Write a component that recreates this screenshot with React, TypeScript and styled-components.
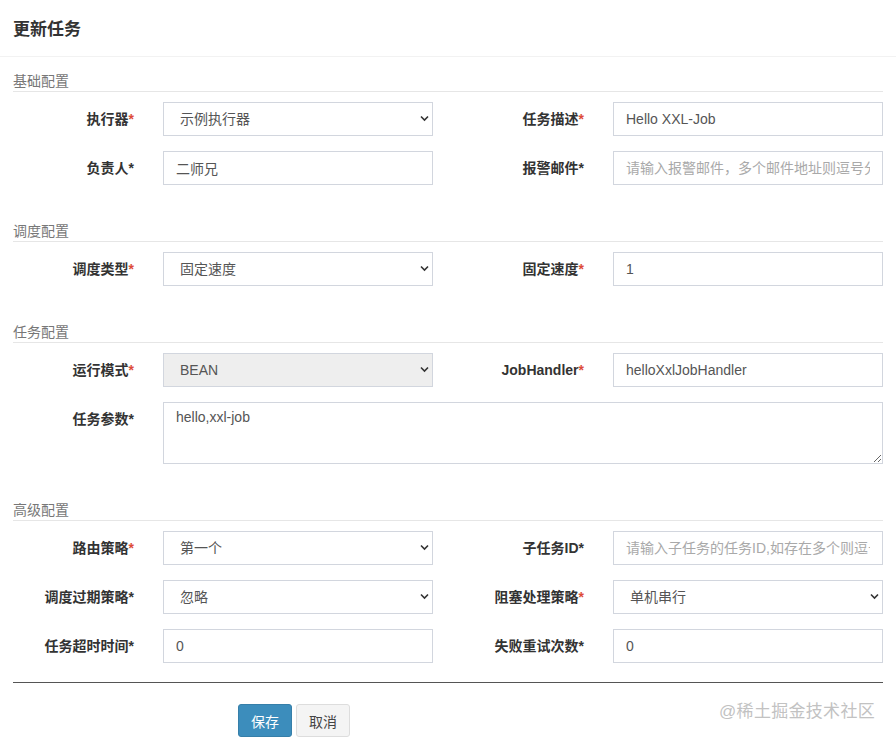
import React from 'react'
import styled, { createGlobalStyle } from 'styled-components'

const GlobalStyle = createGlobalStyle`
  html, body {
    margin: 0;
    padding: 0;
    background: #fff;
  }
  body {
    font-family: "Liberation Sans", "Noto Sans CJK SC", sans-serif;
    font-size: 14px;
    color: #333;
  }
  * { box-sizing: border-box; }
`

const Modal = styled.div`
  width: 896px;
  min-height: 743px;
  background: #fff;
`

const Header = styled.div`
  height: 57px;
  padding: 0 13px;
  display: flex;
  align-items: center;
  border-bottom: 1px solid #f2f2f2;
`

const HeaderTitle = styled.h4`
  margin: 0;
  font-size: 17px;
  font-weight: 600;
  color: #333;
  padding-bottom: 1px;
`

const Body = styled.div`
  padding: 14px 13px 0;
`

const Section = styled.section`
  & + & {
    margin-top: 36px;
  }
`

const SectionTitle = styled.div`
  height: 21px;
  line-height: 20px;
  font-size: 14px;
  color: #777;
  border-bottom: 1px solid #e6e6e6;
  margin-bottom: 10px;
`

const FieldGrid = styled.div`
  display: grid;
  grid-template-columns: 150px 270px 180px 270px;
  row-gap: 15px;
`

const Label = styled.label`
  text-align: right;
  padding: 7px 29px 0 0;
  line-height: 20px;
  font-weight: 700;
  font-size: 14px;
  color: #333;
  white-space: nowrap;
`

const Star = styled.span<{ $red?: boolean }>`
  color: ${(p) => (p.$red ? '#dd4b39' : '#333')};
`

const TextInput = styled.input`
  width: 100%;
  height: 34px;
  padding: 6px 12px;
  border: 1px solid #d2d6de;
  border-radius: 0;
  font-family: inherit;
  font-size: 14px;
  color: #555;
  background: #fff;
  outline: none;
  &::placeholder {
    color: #a9a9a9;
  }
`

const SelectWrap = styled.div`
  position: relative;
  width: 100%;
`

const SelectBox = styled.select`
  width: 100%;
  height: 34px;
  padding: 6px 30px 6px 16px;
  border: 1px solid #d2d6de;
  border-radius: 0;
  font-family: inherit;
  font-size: 14px;
  color: #555;
  background: #fff;
  appearance: none;
  -webkit-appearance: none;
  outline: none;
  &:disabled {
    background: #eee;
    opacity: 1;
    color: #555;
  }
`

const Chevron = styled.svg`
  position: absolute;
  right: 4px;
  top: 13px;
  width: 9px;
  height: 7px;
  pointer-events: none;
`

const TextArea = styled.textarea`
  grid-column: 2 / 5;
  height: 62px;
  padding: 6px 12px;
  border: 1px solid #d2d6de;
  border-radius: 0;
  font-family: inherit;
  font-size: 14px;
  color: #555;
  outline: none;
`

const Footer = styled.div`
  margin: 19px 13px 0;
  border-top: 1px solid #555;
  padding-top: 21px;
  display: flex;
  align-items: flex-start;
`

const Button = styled.button<{ $primary?: boolean }>`
  height: 33px;
  padding: 6px 12px;
  font-family: inherit;
  font-size: 14px;
  border-radius: 3px;
  border: 1px solid ${(p) => (p.$primary ? '#367fa9' : '#ddd')};
  background: ${(p) => (p.$primary ? '#3c8dbc' : '#f4f4f4')};
  color: ${(p) => (p.$primary ? '#fff' : '#444')};
  & + & {
    margin-left: 4px;
  }
`

const Buttons = styled.div`
  display: flex;
  margin-left: 225px;
`

const Watermark = styled.div`
  margin-left: auto;
  margin-right: 8px;
  margin-top: -7px;
  font-size: 17px;
  color: #c2c2c2;
  letter-spacing: 0.3px;
`

type FieldProps = { label: string; red?: boolean }

const FieldLabel = ({ label, red }: FieldProps) => (
  <Label>
    {label}
    <Star $red={red}>*</Star>
  </Label>
)

const Select = ({ value, disabled }: { value: string; disabled?: boolean }) => (
  <SelectWrap>
    <SelectBox value={value} disabled={disabled} onChange={() => {}}>
      <option>{value}</option>
    </SelectBox>
    <Chevron viewBox="0 0 9 7">
      <path d="M1 1.5 L4.5 5 L8 1.5" fill="none" stroke="#333" strokeWidth="1.6" />
    </Chevron>
  </SelectWrap>
)

export default function App() {
  return (
    <>
      <GlobalStyle />
      <Modal>
        <Header>
          <HeaderTitle>更新任务</HeaderTitle>
        </Header>
        <Body>
          <Section>
            <SectionTitle>基础配置</SectionTitle>
            <FieldGrid>
              <FieldLabel label="执行器" red />
              <Select value="示例执行器" />
              <FieldLabel label="任务描述" red />
              <TextInput defaultValue="Hello XXL-Job" />
              <FieldLabel label="负责人" />
              <TextInput defaultValue="二师兄" />
              <FieldLabel label="报警邮件" />
              <TextInput placeholder="请输入报警邮件，多个邮件地址则逗号分隔" />
            </FieldGrid>
          </Section>
          <Section>
            <SectionTitle>调度配置</SectionTitle>
            <FieldGrid>
              <FieldLabel label="调度类型" red />
              <Select value="固定速度" />
              <FieldLabel label="固定速度" red />
              <TextInput defaultValue="1" />
            </FieldGrid>
          </Section>
          <Section>
            <SectionTitle>任务配置</SectionTitle>
            <FieldGrid>
              <FieldLabel label="运行模式" red />
              <Select value="BEAN" disabled />
              <FieldLabel label="JobHandler" red />
              <TextInput defaultValue="helloXxlJobHandler" />
              <FieldLabel label="任务参数" />
              <TextArea defaultValue="hello,xxl-job" />
            </FieldGrid>
          </Section>
          <Section>
            <SectionTitle>高级配置</SectionTitle>
            <FieldGrid>
              <FieldLabel label="路由策略" red />
              <Select value="第一个" />
              <FieldLabel label="子任务ID" />
              <TextInput placeholder="请输入子任务的任务ID,如存在多个则逗号分隔" />
              <FieldLabel label="调度过期策略" />
              <Select value="忽略" />
              <FieldLabel label="阻塞处理策略" red />
              <Select value="单机串行" />
              <FieldLabel label="任务超时时间" />
              <TextInput defaultValue="0" />
              <FieldLabel label="失败重试次数" />
              <TextInput defaultValue="0" />
            </FieldGrid>
          </Section>
        </Body>
        <Footer>
          <Buttons>
            <Button $primary>保存</Button>
            <Button>取消</Button>
          </Buttons>
          <Watermark>@稀土掘金技术社区</Watermark>
        </Footer>
      </Modal>
    </>
  )
}
